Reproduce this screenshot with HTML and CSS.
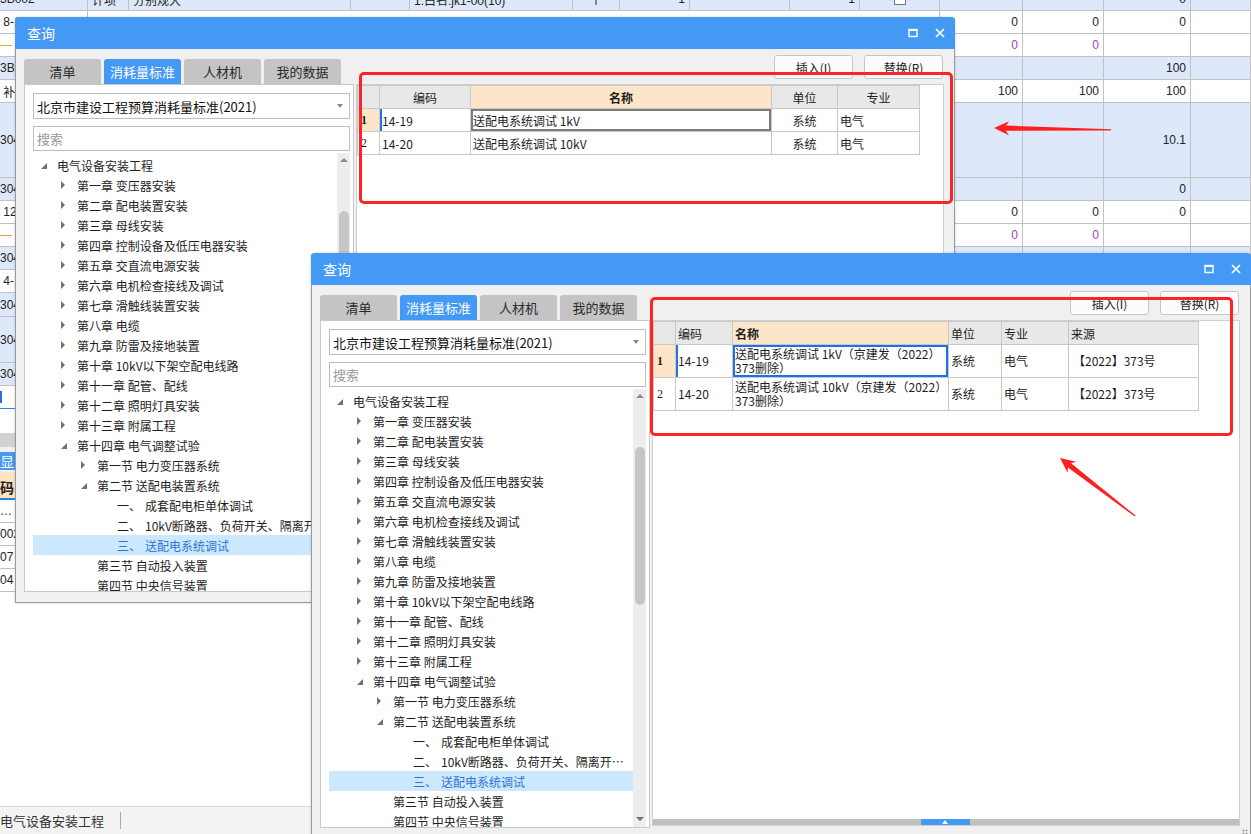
FILE: index.html
```html
<!DOCTYPE html>
<html lang="zh">
<head>
<meta charset="utf-8">
<title>查询</title>
<link rel="stylesheet" href="styles.css">
</head>
<body>
<div class="app">
  <div class="sheet">
    <div class="row blue r0">
      <div class="c a">3B002</div><div class="c">计项</div><div class="c">分别规大</div><div class="c"></div><div class="c">1.白名:jk1-00(10)</div><div class="c ctr">个</div><div class="c num">1</div><div class="c"></div><div class="c num">1</div><div class="c ctr"><span class="chk"></span></div><div class="c"></div><div class="c"></div><div class="c num">0</div><div class="c"></div>
    </div>
    <div class="row">
      <div class="c a">&nbsp;8-1</div><div class="c span"></div><div class="c num">0</div><div class="c num">0</div><div class="c num">0</div><div class="c"></div>
    </div>
    <div class="row">
      <div class="c a"><span class="dash">—</span>&nbsp;<span class="purple">2</span></div><div class="c span"></div><div class="c num purple">0</div><div class="c num purple">0</div><div class="c"></div><div class="c"></div>
    </div>
    <div class="row blue">
      <div class="c a">3B002</div><div class="c span"></div><div class="c"></div><div class="c"></div><div class="c num">100</div><div class="c"></div>
    </div>
    <div class="row">
      <div class="c a">&nbsp;补充</div><div class="c span"></div><div class="c num">100</div><div class="c num">100</div><div class="c num">100</div><div class="c"></div>
    </div>
    <div class="row blue h75">
      <div class="c a">30401</div><div class="c span"></div><div class="c"></div><div class="c"></div><div class="c num">10.1</div><div class="c"></div>
    </div>
    <div class="row blue">
      <div class="c a">30401</div><div class="c span"></div><div class="c"></div><div class="c"></div><div class="c num">0</div><div class="c"></div>
    </div>
    <div class="row">
      <div class="c a">&nbsp;12-1</div><div class="c span"></div><div class="c num">0</div><div class="c num">0</div><div class="c num">0</div><div class="c"></div>
    </div>
    <div class="row">
      <div class="c a"><span class="dash">—</span>&nbsp;<span class="purple">2</span></div><div class="c span"></div><div class="c num purple">0</div><div class="c num purple">0</div><div class="c"></div><div class="c"></div>
    </div>
    <div class="row blue">
      <div class="c a">30401</div><div class="c span"></div><div class="c"></div><div class="c"></div><div class="c"></div><div class="c"></div>
    </div>
    <div class="row">
      <div class="c a">&nbsp;4-1</div><div class="c span"></div><div class="c"></div><div class="c"></div><div class="c"></div><div class="c"></div>
    </div>
    <div class="row blue h24">
      <div class="c a">30401</div><div class="c span"></div><div class="c"></div><div class="c"></div><div class="c"></div><div class="c"></div>
    </div>
    <div class="row blue h46">
      <div class="c a">30401</div><div class="c span"></div><div class="c"></div><div class="c"></div><div class="c"></div><div class="c"></div>
    </div>
    <div class="row blue">
      <div class="c a">30401</div><div class="c span"></div><div class="c"></div><div class="c"></div><div class="c"></div><div class="c"></div>
    </div>
    <div class="row edit">
      <div class="c a"><span class="caretbar"></span></div><div class="c span"></div><div class="c"></div><div class="c"></div><div class="c"></div><div class="c"></div>
    </div>
  </div>
  <div class="sheetgap"></div>
  <div class="hbar"></div>
  <div class="lower">
    <div class="ltabs"><div class="ltab">显示</div></div>
    <div class="lhead">码</div>
    <div class="lrow">…</div>
    <div class="lrow">0020</div>
    <div class="lrow">07</div>
    <div class="lrow">04</div>
  </div>
  <div class="fill"></div>
  <div class="status"><span class="stext">电气设备安装工程</span><span class="ssep"></span></div>

  <!-- dialog 1 -->
  <div class="dialog d1">
    <div class="titlebar">
      <span class="title">查询</span>
      <span class="tbtn"><svg width="10" height="10" viewBox="0 0 10 10"><rect x="1" y="1.5" width="8" height="7" fill="none" stroke="#fff" stroke-width="1.4"/><rect x="1" y="1" width="8" height="2" fill="#fff"/></svg></span>
      <span class="tbtn"><svg width="10" height="10" viewBox="0 0 10 10"><path d="M1 1L9 9M9 1L1 9" stroke="#fff" stroke-width="1.7"/></svg></span>
    </div>
    <div class="dbody">
      <div class="lcol">
        <div class="tabs"><div class="tab">清单</div><div class="tab on">消耗量标准</div><div class="tab">人材机</div><div class="tab">我的数据</div></div>
        <div class="panel">
          <div class="combo"><span class="ctxt">北京市建设工程预算消耗量标准(2021)</span><span class="caret"></span></div>
          <div class="search">搜索</div>
          <div class="treewrap">
            <div class="tree">
              <div class="ti l0"><span class="tw ex"></span><span class="lbl">电气设备安装工程</span></div>
              <div class="ti l1"><span class="tw co"></span><span class="lbl">第一章 变压器安装</span></div>
              <div class="ti l1"><span class="tw co"></span><span class="lbl">第二章 配电装置安装</span></div>
              <div class="ti l1"><span class="tw co"></span><span class="lbl">第三章 母线安装</span></div>
              <div class="ti l1"><span class="tw co"></span><span class="lbl">第四章 控制设备及低压电器安装</span></div>
              <div class="ti l1"><span class="tw co"></span><span class="lbl">第五章 交直流电源安装</span></div>
              <div class="ti l1"><span class="tw co"></span><span class="lbl">第六章 电机检查接线及调试</span></div>
              <div class="ti l1"><span class="tw co"></span><span class="lbl">第七章 滑触线装置安装</span></div>
              <div class="ti l1"><span class="tw co"></span><span class="lbl">第八章 电缆</span></div>
              <div class="ti l1"><span class="tw co"></span><span class="lbl">第九章 防雷及接地装置</span></div>
              <div class="ti l1"><span class="tw co"></span><span class="lbl">第十章 10kV以下架空配电线路</span></div>
              <div class="ti l1"><span class="tw co"></span><span class="lbl">第十一章 配管、配线</span></div>
              <div class="ti l1"><span class="tw co"></span><span class="lbl">第十二章 照明灯具安装</span></div>
              <div class="ti l1"><span class="tw co"></span><span class="lbl">第十三章 附属工程</span></div>
              <div class="ti l1"><span class="tw ex"></span><span class="lbl">第十四章 电气调整试验</span></div>
              <div class="ti l2"><span class="tw co"></span><span class="lbl">第一节 电力变压器系统</span></div>
              <div class="ti l2"><span class="tw ex"></span><span class="lbl">第二节 送配电装置系统</span></div>
              <div class="ti l3"><span class="no">一、</span><span class="lbl">成套配电柜单体调试</span></div>
              <div class="ti l3"><span class="no">二、</span><span class="lbl">10kV断路器、负荷开关、隔离开关及装置系统调试</span></div>
              <div class="ti l3 sel"><span class="no">三、</span><span class="lbl">送配电系统调试</span></div>
              <div class="ti l2"><span class="tw"></span><span class="lbl">第三节 自动投入装置</span></div>
              <div class="ti l2"><span class="tw"></span><span class="lbl">第四节 中央信号装置</span></div>
            </div>
            <div class="vs"><span class="up"></span><span class="thumb"></span><span class="dn"></span></div>
          </div>
        </div>
      </div>
      <div class="rcol">
        <div class="btns"><div class="btn">插入(I)</div><div class="btn">替换(R)</div></div>
        <div class="area">
          <table class="grid g1">
            <colgroup><col class="k1"><col class="k2"><col class="k3"><col class="k4"><col class="k5"></colgroup>
            <tr><th></th><th class="ctr">编码</th><th class="ctr hl">名称</th><th class="ctr">单位</th><th class="ctr">专业</th></tr>
            <tr><td class="rn cur">1</td><td class="code curl">14-19</td><td class="code selg">送配电系统调试 1kV</td><td class="ctr">系统</td><td>电气</td></tr>
            <tr><td class="rn">2</td><td class="code">14-20</td><td class="code">送配电系统调试 10kV</td><td class="ctr">系统</td><td>电气</td></tr>
          </table>
          <div class="hs"><span class="hthumb"></span></div>
        </div>
      </div>
    </div>
  </div>

  <!-- dialog 2 -->
  <div class="dialog d2">
    <div class="titlebar">
      <span class="title">查询</span>
      <span class="tbtn"><svg width="10" height="10" viewBox="0 0 10 10"><rect x="1" y="1.5" width="8" height="7" fill="none" stroke="#fff" stroke-width="1.4"/><rect x="1" y="1" width="8" height="2" fill="#fff"/></svg></span>
      <span class="tbtn"><svg width="10" height="10" viewBox="0 0 10 10"><path d="M1 1L9 9M9 1L1 9" stroke="#fff" stroke-width="1.7"/></svg></span>
    </div>
    <div class="dbody">
      <div class="lcol">
        <div class="tabs"><div class="tab">清单</div><div class="tab on">消耗量标准</div><div class="tab">人材机</div><div class="tab">我的数据</div></div>
        <div class="panel">
          <div class="combo"><span class="ctxt">北京市建设工程预算消耗量标准(2021)</span><span class="caret"></span></div>
          <div class="search">搜索</div>
          <div class="treewrap">
            <div class="tree">
              <div class="ti l0"><span class="tw ex"></span><span class="lbl">电气设备安装工程</span></div>
              <div class="ti l1"><span class="tw co"></span><span class="lbl">第一章 变压器安装</span></div>
              <div class="ti l1"><span class="tw co"></span><span class="lbl">第二章 配电装置安装</span></div>
              <div class="ti l1"><span class="tw co"></span><span class="lbl">第三章 母线安装</span></div>
              <div class="ti l1"><span class="tw co"></span><span class="lbl">第四章 控制设备及低压电器安装</span></div>
              <div class="ti l1"><span class="tw co"></span><span class="lbl">第五章 交直流电源安装</span></div>
              <div class="ti l1"><span class="tw co"></span><span class="lbl">第六章 电机检查接线及调试</span></div>
              <div class="ti l1"><span class="tw co"></span><span class="lbl">第七章 滑触线装置安装</span></div>
              <div class="ti l1"><span class="tw co"></span><span class="lbl">第八章 电缆</span></div>
              <div class="ti l1"><span class="tw co"></span><span class="lbl">第九章 防雷及接地装置</span></div>
              <div class="ti l1"><span class="tw co"></span><span class="lbl">第十章 10kV以下架空配电线路</span></div>
              <div class="ti l1"><span class="tw co"></span><span class="lbl">第十一章 配管、配线</span></div>
              <div class="ti l1"><span class="tw co"></span><span class="lbl">第十二章 照明灯具安装</span></div>
              <div class="ti l1"><span class="tw co"></span><span class="lbl">第十三章 附属工程</span></div>
              <div class="ti l1"><span class="tw ex"></span><span class="lbl">第十四章 电气调整试验</span></div>
              <div class="ti l2"><span class="tw co"></span><span class="lbl">第一节 电力变压器系统</span></div>
              <div class="ti l2"><span class="tw ex"></span><span class="lbl">第二节 送配电装置系统</span></div>
              <div class="ti l3"><span class="no">一、</span><span class="lbl">成套配电柜单体调试</span></div>
              <div class="ti l3"><span class="no">二、</span><span class="lbl">10kV断路器、负荷开关、隔离开关及装置系统调试</span></div>
              <div class="ti l3 sel"><span class="no">三、</span><span class="lbl">送配电系统调试</span></div>
              <div class="ti l2"><span class="tw"></span><span class="lbl">第三节 自动投入装置</span></div>
              <div class="ti l2"><span class="tw"></span><span class="lbl">第四节 中央信号装置</span></div>
            </div>
            <div class="vs"><span class="up"></span><span class="thumb"></span><span class="dn"></span></div>
          </div>
        </div>
      </div>
      <div class="rcol">
        <div class="btns"><div class="btn">插入(I)</div><div class="btn">替换(R)</div></div>
        <div class="area">
          <table class="grid g2">
            <colgroup><col class="k1"><col class="k2"><col class="k3"><col class="k4"><col class="k5"><col class="k6"></colgroup>
            <tr><th></th><th>编码</th><th class="hl">名称</th><th>单位</th><th>专业</th><th>来源</th></tr>
            <tr><td class="rn cur">1</td><td class="code curl">14-19</td><td class="code selb">送配电系统调试 1kV（京建发（2022）<br>373删除）</td><td>系统</td><td>电气</td><td class="src">【2022】373号</td></tr>
            <tr><td class="rn">2</td><td class="code">14-20</td><td class="code">送配电系统调试 10kV（京建发（2022）<br>373删除）</td><td>系统</td><td>电气</td><td class="src">【2022】373号</td></tr>
          </table>
          <div class="hs"><span class="hthumb"></span></div>
        </div>
      </div>
    </div>
    <span class="grip"></span>
  </div>

  <div class="redbox rb1"></div>
  <div class="redbox rb2"></div>
  <svg class="marks" width="1251" height="834" viewBox="0 0 1251 834">
    <polygon fill="#ff1f1f" points="0,0 15,-7 12,-2.6 117,-0.6 117,0.6 12,2.6 15,7" transform="translate(994 128) rotate(0.9)"/>
    <polygon fill="#ff1f1f" points="0,0 15,-7 12,-2.6 95,-0.6 95,0.6 12,2.6 15,7" transform="translate(1060 458) rotate(37.7)"/>
  </svg>
</div>
</body>
</html>
```
FILE: styles.css
```css
* { box-sizing: border-box; }
html, body { margin: 0; padding: 0; }
body {
  font-family: "Noto Sans CJK SC", "Liberation Sans", sans-serif;
  font-size: 12px;
  color: #222;
  background: #fff;
}
.app {
  position: relative;
  width: 1251px;
  height: 834px;
  overflow: hidden;
  display: flex;
  flex-direction: column;
  background: #fff;
}

/* background spreadsheet */
.sheet { margin-top: -12px; display: flex; flex-direction: column; flex: none; }
.row {
  display: grid;
  grid-template-columns: 88px 41px 222px 59px 163px 47px 70px 100px 70px 80px 83px 81px 87px 1fr;
  height: 23px;
  border-bottom: 1px solid #c2c2c2;
}
.row.blue { background: #dde9fb; }
.row.h75 { height: 75px; }
.row.h24 { height: 24px; }
.row.h46 { height: 46px; }
.row.edit { border-bottom: 1px solid #3b7fe0; }
.c {
  border-right: 1px solid #c2c2c2;
  overflow: hidden;
  white-space: nowrap;
  display: flex;
  align-items: center;
  padding: 0 4px;
  font-family: "Liberation Sans", "Noto Sans CJK SC", sans-serif;
  font-size: 12px;
  color: #222;
}
.c.a { padding-left: 0; }
.c.num { justify-content: flex-end; }
.c.ctr { justify-content: center; }
.c.span { grid-column: 2 / 11; }
.purple { color: #a23fbd; }
.dash { color: #f0a030; }
.chk { width: 12px; height: 12px; border: 1px solid #777; background: #fff; display: inline-block; }
.caretbar { width: 2px; height: 12px; background: #2a6fe0; display: inline-block; }
.sheetgap { height: 24px; flex: none; }
.hbar { height: 14px; background: #d2d2d2; flex: none; }
.lower { flex: none; display: flex; flex-direction: column; }
.ltabs { height: 25px; background: #f0f0f0; padding-top: 5px; }
.ltab {
  width: 40px; height: 18px; margin-left: -8px;
  background: #4499f4; color: #fff; font-size: 14px;
  display: flex; align-items: center; padding-left: 8px;
}
.lhead {
  height: 28px; background: #fde4c3; border-bottom: 2px solid #2f7de6;
  font-size: 14px; font-weight: bold; display: flex; align-items: center; padding-top: 4px;
}
.lrow {
  height: 23px; border-bottom: 1px solid #c2c2c2; display: flex; align-items: center;
  font-family: "Liberation Sans", sans-serif; font-size: 12px;
}
.lrow:first-of-type { border-bottom: 2px solid #8a8a8a; }
.fill { flex: 1; }
.status {
  height: 28px; flex: none; background: #f3f3f3; border-top: 1px solid #d6d6d6;
  display: flex; align-items: center; font-size: 13px; color: #333;
}
.stext { width: 120px; }
.ssep { width: 1px; height: 17px; background: #a8a8a8; }

/* dialogs */
.dialog {
  position: absolute;
  width: 940px;
  height: 586px;
  background: #f0f0f0;
  border: 1px solid #9a9a9a;
  border-top: none;
  border-radius: 4px 4px 0 0;
  display: flex;
  flex-direction: column;
  box-shadow: 0 0 3px rgba(0,0,0,0.18);
}
.d1 { left: 15px; top: 17px; }
.d2 { left: 311px; top: 253px; }
.titlebar {
  height: 32px; flex: none;
  background: #4499f4; color: #fff;
  display: flex; align-items: center;
  padding: 0 2px 0 12px;
  border-radius: 4px 4px 0 0;
  font-size: 14px;
  margin: 0 -1px;
}
.title { flex: 1; }
.tbtn { width: 27px; height: 32px; display: flex; align-items: center; justify-content: center; }
.dbody { flex: 1; display: flex; padding: 0 10px 0 8px; min-height: 0; }
.lcol { width: 330px; margin-top: 10px; display: flex; flex-direction: column; flex: none; }
.tabs { display: flex; gap: 3px; height: 25px; flex: none; }
.tab {
  width: 77px; background: #c4c4c4; border-radius: 3px 3px 0 0;
  display: flex; align-items: center; justify-content: center;
  font-size: 13px; color: #2a2a2a;
}
.tab.on { background: #4499f4; color: #fff; }
.panel {
  height: 508px; background: #fff; border: 1px solid #cacaca;
  padding: 8px 3px 0 8px; display: flex; flex-direction: column; flex: none;
}
.combo {
  height: 26px; flex: none; border: 1px solid #bdbdbd;
  display: flex; align-items: center; padding-left: 3px;
  font-size: 13px; color: #111;
}
.ctxt { flex: 1; }
.caret {
  width: 0; height: 0; margin-right: 6px;
  border-left: 3.5px solid transparent; border-right: 3.5px solid transparent;
  border-top: 4px solid #8a8a8a;
}
.search {
  height: 25px; flex: none; margin-top: 7px; border: 1px solid #bdbdbd;
  padding-left: 3px; display: flex; align-items: center;
  font-size: 13px; color: #9a9a9a;
}
.treewrap { flex: 1; display: flex; margin-top: 2px; min-height: 0; }
.tree { flex: 1; min-width: 0; overflow: hidden; padding-top: 2px; }
.ti {
  height: 20px; display: flex; align-items: center; white-space: nowrap;
  font-size: 12px; color: #1e1e1e;
}
.ti.sel { background: #cce8ff; color: #2f74d4; }
.l0 { padding-left: 8px; }
.l1 { padding-left: 28px; }
.l2 { padding-left: 48px; }
.l3 { padding-left: 84px; }
.tw { width: 16px; flex: none; display: flex; align-items: center; }
.tw.co::before {
  content: ""; border-left: 4px solid #707070;
  border-top: 4px solid transparent; border-bottom: 4px solid transparent;
}
.tw.ex::before {
  content: ""; border-bottom: 6px solid #707070; border-left: 6px solid transparent;
  margin-top: 2px;
}
.no { width: 28px; flex: none; }
.lbl { overflow: hidden; text-overflow: ellipsis; min-width: 0; }
.vs { width: 13px; flex: none; background: #ededed; display: flex; flex-direction: column; align-items: center; }
.vs .up {
  margin-top: 5px; width: 0; height: 0;
  border-left: 4px solid transparent; border-right: 4px solid transparent;
  border-bottom: 4px solid #8c8c8c;
}
.vs .thumb { margin-top: 49px; width: 10px; height: 158px; background: #c6c6c6; border-radius: 5px; }
.vs .dn {
  margin-top: auto; margin-bottom: 6px; width: 0; height: 0;
  border-left: 4px solid transparent; border-right: 4px solid transparent;
  border-top: 4px solid #6f6f6f;
}
.rcol { flex: 1; margin-left: 2px; margin-top: 6px; display: flex; flex-direction: column; }
.btns { height: 24px; flex: none; display: flex; justify-content: flex-end; gap: 11px; padding-right: 1px; }
.btn {
  width: 79px; border: 1px solid #c6c6c6; border-radius: 3px; background: #fcfcfc;
  display: flex; align-items: center; justify-content: center; font-size: 12px; color: #222;
}
.area {
  height: 506px; flex: none; margin-top: 5px; background: #fff; border: 1px solid #cfcfcf;
  display: flex; flex-direction: column;
}
.grid { border-collapse: collapse; table-layout: fixed; flex: none; }
.g1 { width: 562px; }
.g2 { width: 545px; }
.g1 .k1, .g2 .k1 { width: 22px; }
.g1 .k2 { width: 91px; }
.g1 .k3 { width: 301px; }
.g1 .k4 { width: 66px; }
.g1 .k5 { width: 82px; }
.g2 .k2 { width: 57px; }
.g2 .k3 { width: 216px; }
.g2 .k4 { width: 53px; }
.g2 .k5 { width: 67px; }
.g2 .k6 { width: 130px; }
.grid th, .grid td {
  border: 1px solid #c9c9c9; padding: 0 2px; font-weight: normal; font-size: 12px;
  white-space: nowrap; overflow: hidden; text-align: left; color: #1e1e1e;
}
.grid th { background: #e8e8e8; height: 23px; }
.grid th.hl { background: #fde6c8; font-weight: bold; }
.g1 td { height: 23px; }
.g2 td { height: 33px; line-height: 14px; }
.grid .ctr { text-align: center; }
.grid td.rn { font-family: "Liberation Serif", serif; padding-left: 3px; }
.grid td.rn.cur { background: #fde6c8; font-weight: bold; }
.grid td.curl { box-shadow: inset 2px 0 0 #2670e8; }
.grid td.selg { box-shadow: inset 0 0 0 2px #7d7d7d; }
.grid td.selb { box-shadow: inset 0 0 0 2px #1f6fe6; }
.grid td.src { padding-left: 4px; }
.hs { margin-top: auto; height: 6px; background: #c0c0c0; padding-left: 268px; flex: none; }
.hthumb { display: block; width: 49px; height: 6px; background: #4499f4; position: relative; }
.hthumb::after {
  content: ""; position: absolute; left: 21px; top: 1px;
  border-left: 3px solid transparent; border-right: 3px solid transparent; border-bottom: 4px solid #fff;
}
.grip {
  position: absolute; right: 2px; bottom: 3px; width: 6px; height: 6px;
  background: radial-gradient(circle, #9a9a9a 0.8px, transparent 1.2px) 0 0 / 3px 3px;
}

/* annotations */
.redbox { position: absolute; border: 3px solid #ff2424; border-radius: 5px; }
.rb1 { left: 359px; top: 72px; width: 594px; height: 132px; }
.rb2 { left: 650px; top: 297px; width: 583px; height: 139px; }
.marks { position: absolute; left: 0; top: 0; pointer-events: none; }
```
